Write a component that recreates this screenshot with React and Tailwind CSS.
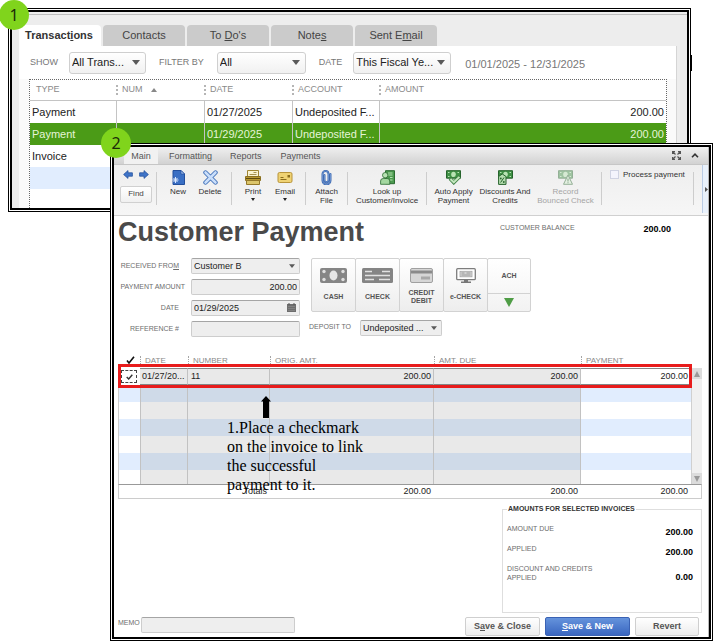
// Third-Party modules.
import { useState } from "react";
import clsx from "clsx";

// Small down arrow used by every drop-down.
function Caret({ className }) {
  return (
    <svg
      viewBox="0 0 8 5"
      className={clsx("pointer-events-none absolute", className)}
    >
      <path d="M0 0h8L4 5z" fill="#5a5a5a" />
    </svg>
  );
}

// Frame with a double black line around its content.
function Frame({ className, children }) {
  return (
    <section className={clsx("border border-black bg-white p-px", className)}>
      <div className="border-2 border-black">{children}</div>
    </section>
  );
}

// Numbered green step marker.
function Step({ number, className }) {
  return (
    <span
      className={clsx(
        "absolute z-10 flex size-[30px] items-center justify-center rounded-full bg-[#80d41c]",
        "font-['Noto_Sans',sans-serif] text-base text-[#1c2b08]",
        className,
      )}
    >
      {number}
    </span>
  );
}

/* ---------- Transactions window ---------- */

function FilterSelect({ id, label, value, className, labelClass }) {
  return (
    <>
      <label htmlFor={id} className={clsx("text-[9px] text-[#777]", labelClass)}>
        {label}
      </label>
      <div className={clsx("relative", className)}>
        <select
          id={id}
          className="block h-[22px] w-full appearance-none rounded-[3px] border border-[#cfcfcf] bg-linear-to-b
            from-white to-[#f1f1f1] px-0.5 text-[11px] text-[#222]"
        >
          <option>{value}</option>
        </select>
        <Caret className="top-2 right-1.5 h-[5px] w-2" />
      </div>
    </>
  );
}

const transactions = [
  { type: "Payment", date: "01/27/2025", account: "Undeposited F...", amount: "200.00" },
  { type: "Payment", date: "01/29/2025", account: "Undeposited F...", amount: "200.00", selected: true },
  { type: "Invoice", date: "", account: "", amount: "" },
  { type: "", date: "", account: "", amount: "", striped: true },
];

function TransactionsWindow() {
  const tab = "h-[21px] w-[82px] rounded-t-[4px] bg-[#cbcbcb] text-[11px] text-[#444]";
  const head = "p-0 text-left text-[9px] font-normal text-[#8a8a8a] border-b border-[#c4c4c4]";
  const grip = "flex h-2.5 items-center border-l-2 border-dotted border-[#b5b5b5] pl-1";

  return (
    <Frame className="mr-[23px] ml-2">
      <div className="bg-[#ededed] pt-0.5">
        <div className="border-t border-[#bdbdbd] pt-2.5 pl-[7px]">
          {/* Tabs */}
          <div className="flex gap-0.5">
            <button className="h-[21px] w-[82px] rounded-t-[4px] bg-white pr-0.5 text-[11px] font-bold text-[#333]">
              Transact<u>i</u>ons
            </button>
            <button className={tab}>Contacts</button>
            <button className={tab}>
              To <u>D</u>o&apos;s
            </button>
            <button className={tab}>
              Note<u>s</u>
            </button>
            <button className={tab}>
              Sent E<u>m</u>ail
            </button>
          </div>

          <div className="mr-2.5 border-r border-[#d5d5d5] bg-[#fafafa]">
            {/* Filters */}
            <div className="flex h-[33px] items-center bg-white pl-[11px]">
              <FilterSelect id="show" label="SHOW" value="All Trans..." className="ml-[11px] w-[77px]" />
              <FilterSelect
                id="filterBy"
                label="FILTER BY"
                value="All"
                className="ml-[13px] w-[89px]"
                labelClass="ml-[13px]"
              />
              <FilterSelect
                id="dateRange"
                label="DATE"
                value="This Fiscal Ye..."
                className="ml-[11px] w-[98px]"
                labelClass="ml-[13px]"
              />
              <span className="ml-[14px] pt-1 text-[11px] text-[#777]">
                01/01/2025 - 12/31/2025
              </span>
            </div>

            {/* List */}
            <div className="mr-[9px] ml-2.5 border-x border-t border-dotted border-[#666] bg-white">
              <table className="w-full table-fixed border-separate border-spacing-0">
                <colgroup>
                  <col className="w-[86px]" />
                  <col className="w-[88px]" />
                  <col className="w-[88px]" />
                  <col className="w-[87px]" />
                  <col />
                </colgroup>
                <thead>
                  <tr className="h-[21px]">
                    <th className={clsx(head, "pl-1.5")}>TYPE</th>
                    <th className={head}>
                      <span className={grip}>
                        NUM
                        <svg viewBox="0 0 6 4" className="ml-2 h-1 w-1.5">
                          <path d="M0 4h6L3 0z" fill="#888" />
                        </svg>
                      </span>
                    </th>
                    <th className={head}>
                      <span className={grip}>DATE</span>
                    </th>
                    <th className={head}>
                      <span className={grip}>ACCOUNT</span>
                    </th>
                    <th className={head}>
                      <span className={grip}>AMOUNT</span>
                    </th>
                  </tr>
                </thead>
                <tbody className="text-[11px]">
                  {transactions.map((row, i) => {
                    const line = row.type && "border-l border-[#c4c4c4]";
                    return (
                      <tr
                        key={i}
                        className={clsx(
                          "h-[22px]",
                          row.selected && "bg-[#4b9b17] text-[#e6f5d8]",
                          row.striped && "bg-[#e1edfe]",
                          !row.selected && "text-[#222]",
                        )}
                      >
                        <td className="p-0 pl-0.5">{row.type}</td>
                        <td className={clsx("p-0", line)} />
                        <td className={clsx("p-0 pl-0.5", line)}>{row.date}</td>
                        <td className={clsx("p-0 pl-0.5 whitespace-nowrap", line)}>{row.account}</td>
                        <td className={clsx("p-0 pr-0.5 text-right", line)}>{row.amount}</td>
                      </tr>
                    );
                  })}
                  <tr className="h-[19px]">
                    <td colSpan={5} />
                  </tr>
                </tbody>
              </table>
            </div>
          </div>
        </div>
      </div>
    </Frame>
  );
}

/* ---------- Toolbar icons ---------- */

function ArrowIcon({ flip }) {
  return (
    <svg viewBox="0 0 10 9" className={clsx("h-[9px] w-2.5", flip && "-scale-x-100")}>
      <path d="M.6 4.5 5 .6v2.200h4.400v3.400H5v2.200z" fill="#3f74c8" stroke="#2a55a0" strokeWidth=".8" />
    </svg>
  );
}

function NewIcon() {
  return (
    <svg viewBox="0 0 15 15" className="size-[15px]">
      <path d="M2 .5h8l3.500 3.500v10.500H2z" fill="#3a6fc4" stroke="#234f9c" />
      <path d="M10 .5V4h3.500z" fill="#a9c7f2" stroke="#234f9c" strokeWidth=".7" />
      <path d="M4.500 7v6M1.500 10h6M2.400 7.900l4.200 4.200M6.600 7.900l-4.200 4.200" stroke="#dbe9ff" />
    </svg>
  );
}

function DeleteIcon() {
  return (
    <svg viewBox="0 0 15 15" className="size-[15px]" strokeLinecap="round">
      <path d="m2.500 2.500 10 10m0-10-10 10" stroke="#3f6fb8" strokeWidth="4.400" />
      <path d="m2.500 2.500 10 10m0-10-10 10" stroke="#c9defa" strokeWidth="2.600" />
    </svg>
  );
}

function PrintIcon() {
  return (
    <svg viewBox="0 0 16 15" className="h-[15px] w-4">
      <path d="M2.500.5h11V7h-11z" fill="#fbf3cf" stroke="#a08633" />
      <path d="M8.500 2.500h3M4.500 4.500h7" stroke="#a89350" />
      <path d="M.5 6.500h15v4H.5z" fill="#b7962f" stroke="#8b7020" />
      <path d="M1 8.500h14" stroke="#5f4a0d" />
      <path d="M1.500 10.500h13v4h-13z" fill="#dcc56a" stroke="#94782a" />
    </svg>
  );
}

function EmailIcon() {
  return (
    <svg viewBox="0 0 16 15" className="h-[15px] w-4">
      <rect x="1" y="2.500" width="14" height="10" rx="1.500" fill="#efd273" stroke="#b8943a" />
      <path d="M3.500 9.500h6M3.500 7.500h3" stroke="#8a6c1c" />
      <path d="M10.500 5h2.500v2.500h-2.500z" fill="#8a6c1c" />
    </svg>
  );
}

function AttachIcon() {
  return (
    <svg viewBox="0 0 15 15" className="size-[15px]" fill="none" strokeLinecap="round">
      <path
        d="M11.500 4v6.500a4 4 0 0 1-8 0V4a3 3 0 0 1 6 0v6.300a2 2 0 0 1-4 0V5"
        stroke="#2f5ca8"
        strokeWidth="1.900"
      />
      <path
        d="M11.500 4v6.500a4 4 0 0 1-8 0V4a3 3 0 0 1 6 0v6.300a2 2 0 0 1-4 0V5"
        stroke="#8db3ea"
        strokeWidth=".6"
      />
    </svg>
  );
}

function LookUpIcon() {
  return (
    <svg viewBox="0 0 15 15" className="size-[15px]">
      <path d="M5.500.7h9v13h-9z" fill="#4c9a4f" stroke="#2b6b30" />
      <path d="M8 3h4.500M8 5h4.500M10 7.500h2.500M10 10h2.500" stroke="#b4e2b0" />
      <circle cx="5.200" cy="5.200" r="2.700" fill="#b9e3b4" stroke="#2b6b30" strokeWidth=".8" />
      <path d="M.6 14.300V11q0-2.500 2.600-2.500h4Q9.800 8.500 9.800 11v3.300z" fill="#a3d79f" stroke="#2b6b30" strokeWidth=".8" />
    </svg>
  );
}

// Green bank note shared by the payment icons.
function Note() {
  return (
    <>
      <path d="M.5.7h14v7.500H.5z" fill="#3f9145" stroke="#26632c" />
      <ellipse cx="7.500" cy="4.400" rx="2.300" ry="2.600" fill="#b9e3b4" />
      <path d="M2 2.500h1.500M2 6.500h1.500M11.500 2.500H13M11.500 6.500H13" stroke="#b9e3b4" />
    </>
  );
}

function AutoApplyIcon() {
  return (
    <svg viewBox="0 0 15 15" className="size-[15px]" fill="none">
      <Note />
      <path d="m4 8.500 3.800 4 6-6" stroke="#3b7d40" strokeWidth="3.600" />
      <path d="m4.400 9 3.400 3.300 5.600-5.400" stroke="#c4e8bf" strokeWidth="2" />
    </svg>
  );
}

function DiscountIcon() {
  return (
    <svg viewBox="0 0 15 15" className="size-[15px]">
      <Note />
      <path d="M.6 6.500 4.300 4 8 6.500v7.900H.6z" fill="#b5deb0" stroke="#26632c" />
      <path d="m2.600 12.500 3.400-5" stroke="#26632c" />
      <circle cx="2.800" cy="8.500" r=".9" fill="#26632c" />
      <circle cx="5.800" cy="12" r=".9" fill="#26632c" />
    </svg>
  );
}

function BouncedIcon() {
  return (
    <svg viewBox="0 0 15 15" className="size-[15px] opacity-45">
      <Note />
      <path d="m10 5 4.500 9.300h-9z" fill="#d4efcf" stroke="#26632c" />
      <path d="M10 8.500v3M10 12.300v1" stroke="#26632c" strokeWidth="1.200" />
    </svg>
  );
}

function Tool({ icon, lines, menu, disabled, className }) {
  return (
    <button
      disabled={disabled}
      className={clsx(
        "flex flex-col items-center text-[8px] leading-[9px] whitespace-nowrap",
        disabled ? "text-[#a5a5a5]" : "text-[#333]",
        className,
      )}
    >
      <span className="mb-0.5">{icon}</span>
      {lines.map((line) => (
        <span key={line}>{line}</span>
      ))}
      {menu && (
        <svg viewBox="0 0 4 3" className="mt-0.5 h-[3px] w-1">
          <path d="M0 0h4L2 3z" fill="#222" />
        </svg>
      )}
    </button>
  );
}

function Divider() {
  return <span className="mt-0.5 h-[33px] w-px shrink-0 bg-[#cdcdcd]" />;
}

function Toolbar() {
  return (
    <div className="flex h-[51px] border-b border-[#d0d0d0] bg-linear-to-b from-[#eeeeee] to-[#f6f6f6]">
      <div className="flex flex-1 items-start pt-[5px]">
        <div className="w-[42px] pl-1.5">
          <div className="flex gap-1.5 px-[3px]">
            <button aria-label="Previous">
              <ArrowIcon />
            </button>
            <button aria-label="Next">
              <ArrowIcon flip />
            </button>
          </div>
          <button
            className="mt-0.5 h-[17px] w-8 rounded-[2px] border border-[#d0d0d0] bg-linear-to-b from-white
              to-[#f0f0f0] text-[8px] text-[#444]"
          >
            Find
          </button>
        </div>
        <Divider />
        <div className="flex px-[5px]">
          <Tool className="w-8" icon={<NewIcon />} lines={["New"]} />
          <Tool className="w-8" icon={<DeleteIcon />} lines={["Delete"]} />
        </div>
        <Divider />
        <div className="flex pr-1 pl-[5px]">
          <Tool className="w-8" icon={<PrintIcon />} lines={["Print"]} menu />
          <Tool className="w-8" icon={<EmailIcon />} lines={["Email"]} menu />
        </div>
        <Divider />
        <Tool className="w-[41px]" icon={<AttachIcon />} lines={["Attach", "File"]} />
        <Divider />
        <Tool className="w-[78px]" icon={<LookUpIcon />} lines={["Look up", "Customer/Invoice"]} />
        <Divider />
        <div className="flex px-[5px]">
          <Tool className="w-[43px]" icon={<AutoApplyIcon />} lines={["Auto Apply", "Payment"]} />
          <Tool className="w-[60px]" icon={<DiscountIcon />} lines={["Discounts And", "Credits"]} />
          <Tool
            className="w-[61px]"
            icon={<BouncedIcon />}
            lines={["Record", "Bounced Check"]}
            disabled
          />
        </div>
        <Divider />
        <label className="flex items-center gap-1 px-2 text-[8px] leading-[9px] whitespace-nowrap text-[#333]">
          <input
            type="checkbox"
            className="size-[9px] appearance-none border border-[#cfd3e2] bg-[#f3f4fc]"
          />
          Process payment
        </label>
        <Divider />
      </div>
      <button
        aria-label="Show side panel"
        className="flex h-12 w-1.5 shrink-0 items-center justify-end border-l border-[#b9cbe4] bg-[#e9f1fb]"
      >
        <svg viewBox="0 0 3 5" className="h-[5px] w-[3px]">
          <path d="M0 0v5l3-2.500z" fill="#555" />
        </svg>
      </button>
    </div>
  );
}

/* ---------- Customer Payment window ---------- */

const field =
  "h-4 w-full appearance-none rounded-[2px] border border-[#cdcdcd] border-t-[#a5a5a5] bg-[#eeeeee] px-0.5 text-[9px] leading-[14px] text-[#222]";
const caption = "text-[7px] leading-[9px] whitespace-nowrap text-[#6d6d6d]";

function FieldRow({ id, label, wide, children }) {
  return (
    <div className="flex items-start">
      <div className={clsx("flex w-[67px] justify-end pt-[3px]", !wide && "pr-1.5")}>
        <label htmlFor={id} className={caption}>
          {label}
        </label>
      </div>
      <div className="relative ml-1.5 flex w-[109px]">{children}</div>
    </div>
  );
}

function PayMethod({ icon, lines }) {
  return (
    <button
      className="flex h-[54px] w-[45px] flex-col items-center rounded-[2px] border border-[#d2d2d2] bg-linear-to-b
        from-white to-[#ededed] pt-[9px] text-[7px] leading-2 font-bold text-[#555]"
    >
      {icon}
      <span className="mt-1.5 flex h-4 flex-col justify-center">
        {lines.map((line) => (
          <span key={line}>{line}</span>
        ))}
      </span>
    </button>
  );
}

function PayMethods() {
  return (
    <div className="flex -space-x-px">
      <PayMethod
        lines={["CASH"]}
        icon={
          <svg viewBox="0 0 27 15" className="h-[15px] w-[27px]">
            <rect width="27" height="15" rx="2" fill="#858585" />
            <ellipse cx="13.500" cy="7.500" rx="4" ry="5" fill="#e6e6e6" />
            <g fill="#e0e0e0">
              <circle cx="4" cy="3.500" r="1.700" />
              <circle cx="4" cy="11.500" r="1.700" />
              <circle cx="23" cy="3.500" r="1.700" />
              <circle cx="23" cy="11.500" r="1.700" />
            </g>
          </svg>
        }
      />
      <PayMethod
        lines={["CHECK"]}
        icon={
          <svg viewBox="0 0 31 15" className="h-[15px] w-[31px]">
            <rect width="31" height="15" rx="1.500" fill="#848484" />
            <path d="M3 3.500h7M20 3.500h8M3 7.500h25M3 11.500h9M17 11.500h11" stroke="#e2e2e2" strokeWidth="1.500" />
          </svg>
        }
      />
      <PayMethod
        lines={["CREDIT", "DEBIT"]}
        icon={
          <svg viewBox="0 0 23 15" className="h-[15px] w-[23px]">
            <rect x=".5" y=".5" width="22" height="14" rx="1.500" fill="#d6d6d6" stroke="#a0a0a0" />
            <path d="M1 2.500h21v3H1z" fill="#8a8a8a" />
            <path d="M11 8.500h9v3h-9z" fill="#a8a8a8" />
          </svg>
        }
      />
      <PayMethod
        lines={["e-CHECK"]}
        icon={
          <svg viewBox="0 0 20 15" className="h-[15px] w-5">
            <rect x=".7" y=".7" width="18.600" height="11" rx="1" fill="#fff" stroke="#7d7d7d" strokeWidth="1.300" />
            <rect x="4" y="3.300" width="12" height="5.500" fill="#d2d2d2" stroke="#a5a5a5" strokeWidth=".8" />
            <path d="M5.500 5h3M10.500 5h4M5.500 7h9" stroke="#8d8d8d" strokeWidth=".8" />
            <path d="M8 12h4v1.500h3V15H5v-1.500h3z" fill="#777" />
          </svg>
        }
      />
      <div className="flex h-[54px] w-11 flex-col rounded-[2px] border border-[#d2d2d2] bg-linear-to-b from-white to-[#f2f2f2]">
        <button className="h-[34px] text-[7px] font-bold text-[#555]">ACH</button>
        <button
          aria-label="More payment methods"
          className="flex flex-1 items-center justify-center border-t border-[#d2d2d2]"
        >
          <svg viewBox="0 0 10 9" className="h-[9px] w-2.5">
            <path d="M0 0h10L5 9z" fill="#4f9d46" />
          </svg>
        </button>
      </div>
    </div>
  );
}

function InvoiceTable() {
  const [checked, setChecked] = useState(true); // Invoice linked to the payment.
  const head = "p-0 text-left align-top text-[8px] leading-[10px] font-normal text-[#8a8a8a]";
  const grip = "block h-2.5 border-l border-dotted border-[#a5a5a5] pl-1";
  const line = "border-r border-[#c2c2c2]";
  const picked = "border-y border-y-[#858585] bg-[#e9e9e9] p-0 text-[#222]";
  const total = "border-y border-t-[#999] border-b-[#ccc] p-0 pr-[3px] text-right";

  return (
    <div className="relative mt-[19px]">
      <table className="w-full table-fixed border-separate border-spacing-0 text-[9px] leading-[13px]">
        <colgroup>
          <col className="w-[22px]" />
          <col className="w-12" />
          <col className="w-[82px]" />
          <col />
          <col className="w-[147px]" />
          <col className="w-[110px]" />
          <col className="w-[11px]" />
        </colgroup>
        <thead>
          <tr className="h-3">
            <th className={head}>
              <svg viewBox="0 0 9 8" className="ml-2 h-2 w-[9px]" fill="none">
                <path d="m1 4.500 2 2.500L8 .7" stroke="#111" strokeWidth="1.600" />
              </svg>
            </th>
            <th className={head}>
              <span className={grip}>DATE</span>
            </th>
            <th className={head}>
              <span className={grip}>NUMBER</span>
            </th>
            <th className={head}>
              <span className={grip}>ORIG. AMT.</span>
            </th>
            <th className={head}>
              <span className={grip}>AMT. DUE</span>
            </th>
            <th className={head}>
              <span className={grip}>PAYMENT</span>
            </th>
            <th className="p-0" />
          </tr>
        </thead>
        <tbody>
          <tr className="h-[17px]">
            <td className="border-l border-[#ccc] p-0">
              <label className="relative ml-0.5 flex h-[13px] w-4">
                <input
                  type="checkbox"
                  aria-label="Apply payment to invoice 11"
                  checked={checked}
                  onChange={(e) => setChecked(e.target.checked)}
                  className="h-full w-full appearance-none border border-dashed border-[#444]"
                />
                {checked && (
                  <svg viewBox="0 0 7 6" className="absolute top-1 left-[5px] h-1.5 w-[7px]" fill="none">
                    <path d="m.7 3 2 2L6.300.8" stroke="#333" strokeWidth="1.400" />
                  </svg>
                )}
              </label>
            </td>
            <td className={clsx(picked, line, "pl-0.5")}>01/27/20...</td>
            <td className={clsx(picked, line, "pl-[3px]")}>11</td>
            <td className={clsx(picked, line, "pr-0.5 text-right")}>200.00</td>
            <td className={clsx(picked, line, "pr-0.5 text-right")}>200.00</td>
            <td className="border-y border-[#858585] p-0 pr-[3px] text-right text-[#222]">200.00</td>
            <td rowSpan={7} className="h-[116px] border-l border-[#d0d0d0] bg-[#f0f0f0] p-0">
              <div className="flex h-[116px] flex-col justify-between">
                <button aria-label="Scroll up" className="flex h-[11px] items-center justify-center bg-[#dcdcdc]">
                  <svg viewBox="0 0 6 6" className="size-1.5">
                    <path d="M0 6h6L3 0z" fill="#999" />
                  </svg>
                </button>
                <button aria-label="Scroll down" className="flex h-[11px] items-center justify-center bg-[#dcdcdc]">
                  <svg viewBox="0 0 6 6" className="size-1.5">
                    <path d="M0 0h6L3 6z" fill="#999" />
                  </svg>
                </button>
              </div>
            </td>
          </tr>
          {[0, 1, 2, 3, 4, 5].map((i) => {
            const blue = i % 2 === 0;
            const edge = blue ? "bg-[#e1edfe]" : "bg-white";
            const middle = blue ? "bg-[#cfdae8]" : "bg-[#e9e9e9]";
            return (
              <tr key={i} className={i === 5 ? "h-[14px]" : "h-[17px]"}>
                <td className={clsx("border-l border-[#ccc] p-0", edge)} />
                <td className={clsx("border-l p-0", line, middle)} />
                <td className={clsx("p-0", line, middle)} />
                <td className={clsx("p-0", line, middle)} />
                <td className={clsx("p-0", line, middle)} />
                <td className={clsx("p-0", edge)} />
              </tr>
            );
          })}
        </tbody>
        <tfoot>
          <tr className="h-[15px] text-[#222]">
            <td colSpan={3} className={clsx(total, "border-l border-l-[#ccc]")}>
              Totals
            </td>
            <td className={total}>200.00</td>
            <td className={total}>200.00</td>
            <td className={total}>200.00</td>
            <td className="border-t border-r border-b border-t-[#999] border-r-[#ccc] border-b-[#ccc] p-0" />
          </tr>
        </tfoot>
      </table>

      {/* Highlight around the linked invoice. */}
      <div className="pointer-events-none absolute top-2 right-2.5 left-0 h-6 border-3 border-[#e81c1c]" />

      {/* Note with its arrow. */}
      <div className="pointer-events-none absolute top-10 left-[109px]">
        <svg viewBox="0 0 10 22" className="ml-[34px] h-[22px] w-2.5">
          <path d="M5 0 0 5.500h2V22h6V5.500h2z" fill="#000" />
        </svg>
        <p className="font-['Liberation_Serif',serif] text-base leading-[19px] whitespace-nowrap text-black">
          1.Place a checkmark
          <br />
          on the invoice to link
          <br />
          the successful
          <br />
          payment to it.
        </p>
      </div>
    </div>
  );
}

function CustomerPaymentWindow() {
  const value = "self-end text-[9px] leading-[9px] font-bold text-black";
  const action =
    "h-[19px] rounded-[2px] border border-[#cfcfcf] bg-linear-to-b from-white to-[#ececec] text-[9px] font-bold text-[#555]";

  return (
    <Frame className="relative -mt-[69px] mr-px ml-[110px]">
      <Step number="2" className="-top-4 -left-2.5" />
      <div className="border-r border-[#bbb] pb-px">
        {/* Ribbon tabs */}
        <div className="flex h-[18px] items-end border-b border-[#c6c6c6] bg-linear-to-b from-[#f0f0f0] to-[#d2d2d2] pl-2.5 text-[9px] text-[#555]">
          <button className="h-[17px] w-[34px] rounded-t-[2px] bg-[#f1f1f1] pt-[3px]">Main</button>
          <button className="ml-[11px] h-[17px] pt-[3px]">Formatting</button>
          <button className="ml-[18px] h-[17px] pt-[3px]">Reports</button>
          <button className="ml-[19px] h-[17px] pt-[3px]">Payments</button>
          <span className="flex-1" />
          <button aria-label="Expand" className="mb-1">
            <svg viewBox="0 0 9 9" className="size-[9px]" fill="none" stroke="#555" strokeWidth="1.200">
              <path d="M.6 3V.6H3M.6.6 3.500 3.500M6 .6h2.400V3M8.400.6 5.500 3.500M.6 6v2.400H3M.6 8.400l2.900-2.900M8.400 6v2.400H6M8.400 8.400 5.500 5.500" />
            </svg>
          </button>
          <button aria-label="Collapse" className="mr-[9px] mb-1.5 ml-2.5">
            <svg viewBox="0 0 8 5" className="h-[5px] w-2" fill="none">
              <path d="m1 4.200 3-3 3 3" stroke="#333" strokeWidth="1.600" />
            </svg>
          </button>
        </div>

        <Toolbar />

        <div className="pr-1.5 pl-1">
          {/* Heading and balance */}
          <div className="flex justify-between">
            <h1 className="h-[34px] text-[27px] leading-[33px] font-bold text-[#4a4a4a]">
              Customer Payment
            </h1>
            <div className="mt-[7px] mr-[31px] flex w-[171px] justify-between">
              <span className={caption}>CUSTOMER BALANCE</span>
              <span className="pt-0.5 text-[9px] leading-[9px] font-bold text-black">200.00</span>
            </div>
          </div>

          {/* Payment form */}
          <div className="mt-2 flex gap-[11px]">
            <div className="flex flex-col gap-[5px]">
              <FieldRow
                id="receivedFrom"
                label={
                  <>
                    RECEIVED FRO<u>M</u>
                  </>
                }
              >
                <select id="receivedFrom" className={field}>
                  <option>Customer B</option>
                </select>
                <Caret className="top-1.5 right-[5px] h-1 w-1.5" />
              </FieldRow>
              <FieldRow id="amount" label="PAYMENT AMOUNT" wide>
                <input id="amount" type="text" defaultValue="200.00" className={clsx(field, "text-right")} />
              </FieldRow>
              <FieldRow id="date" label="DATE">
                <input id="date" type="text" defaultValue="01/29/2025" className={field} />
                <svg viewBox="0 0 9 9" className="absolute top-[3px] right-1 size-[9px]">
                  <path d="M0 1h9v8H0z" fill="#6d6d6d" />
                  <path d="M2 0v2M7 0v2" stroke="#555" />
                  <path d="M1 3.500h7M1 5.500h7M1 7.500h7" stroke="#8f8f8f" strokeWidth=".6" />
                </svg>
              </FieldRow>
              <FieldRow id="reference" label="REFERENCE #">
                <input id="reference" type="text" className={field} />
              </FieldRow>
            </div>

            <div>
              <PayMethods />
              <div className="mt-2 -ml-0.5 flex items-start">
                <label htmlFor="depositTo" className={clsx(caption, "w-[51px] pt-0.5")}>
                  DEPOSIT TO
                </label>
                <div className="relative flex w-[82px]">
                  <select id="depositTo" className={field}>
                    <option>Undeposited ...</option>
                  </select>
                  <Caret className="top-1.5 right-[5px] h-1 w-1.5" />
                </div>
              </div>
            </div>
          </div>

          <InvoiceTable />

          {/* Amounts */}
          <fieldset className="mt-1.5 ml-auto h-[108px] w-[200px] border border-[#dedede] pr-2 pl-1">
            <legend className="px-px text-[7px] leading-2 font-bold whitespace-nowrap text-[#333]">
              AMOUNTS FOR SELECTED INVOICES
            </legend>
            <dl className="flex flex-col gap-[7px] pt-[11px]">
              <div className="flex h-[13px] justify-between">
                <dt className={caption}>AMOUNT DUE</dt>
                <dd className={value}>200.00</dd>
              </div>
              <div className="flex h-[13px] justify-between">
                <dt className={caption}>APPLIED</dt>
                <dd className={value}>200.00</dd>
              </div>
              <div className="flex justify-between">
                <dt className={caption}>
                  DISCOUNT AND CREDITS
                  <br />
                  APPLIED
                </dt>
                <dd className={value}>0.00</dd>
              </div>
            </dl>
          </fieldset>

          {/* Footer */}
          <div className="mt-1 flex items-start">
            <label htmlFor="memo" className={clsx(caption, "w-[23px] pt-px")}>
              MEMO
            </label>
            <input id="memo" type="text" className={clsx(field, "max-w-[154px]")} />
            <div className="mr-[3px] ml-auto flex shrink-0 gap-[5px]">
              <button className={clsx(action, "w-[75px]")}>
                S<u>a</u>ve &amp; Close
              </button>
              <button
                className="h-[19px] w-[85px] rounded-[2px] border border-[#3a62b4] bg-linear-to-b from-[#6593dc]
                  to-[#3a66c0] text-[9px] font-bold text-white"
              >
                <u>S</u>ave &amp; New
              </button>
              <button className={clsx(action, "w-16")}>Revert</button>
            </div>
          </div>
        </div>
      </div>
    </Frame>
  );
}

function App() {
  return (
    <main className="relative overflow-hidden bg-white pt-2 pb-0.5 font-['Liberation_Sans',Arial,sans-serif]">
      <Step number="1" className="top-0 -left-px" />
      <span className="absolute top-[55px] right-[22px] h-4 w-0.5 bg-black" />
      <TransactionsWindow />
      <CustomerPaymentWindow />
    </main>
  );
}

export default App;
